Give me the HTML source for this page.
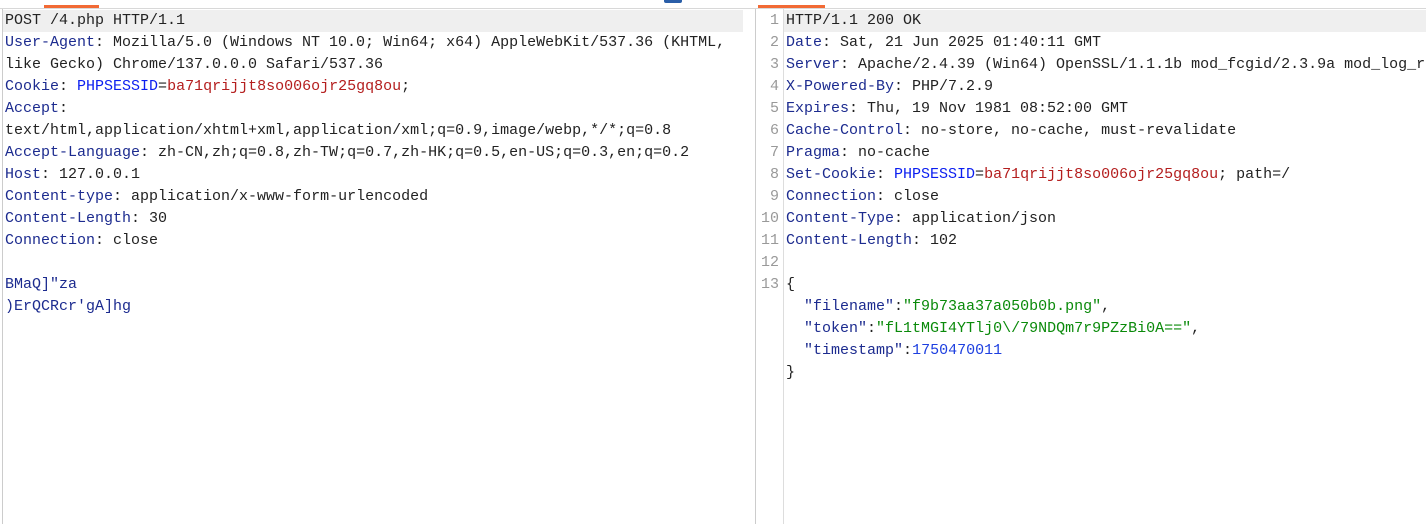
<!DOCTYPE html>
<html><head><meta charset="utf-8"><style>
body{margin:0;width:1426px;height:524px;background:#fff;position:relative;overflow:hidden;font-family:"Liberation Mono","Noto Sans CJK SC",monospace;font-size:15px;}
.tabline{position:absolute;top:8px;left:0;width:1426px;height:1px;background:#d8d8d8}
.or{position:absolute;top:5px;height:3px;background:#f26a35}
.ln{position:absolute;white-space:pre;line-height:22px;height:22px;color:#222;margin-top:1px}
.k{color:#1c2b8f}.b{color:#0b1ef0}.r{color:#b41e1e}.g{color:#0a8a0a}.n{color:#1d3fe0}
.num{position:absolute;left:757px;width:22px;text-align:right;color:#999;line-height:22px;white-space:pre;margin-top:1px}
</style></head><body>
<div class="tabline"></div>
<div class="or" style="left:44px;width:55px"></div>
<div class="or" style="left:758px;width:67px"></div>
<div style="position:absolute;left:664px;top:0;width:18px;height:3px;background:#2a5ea8;border-radius:0 0 2px 2px"></div>
<div style="position:absolute;left:2px;top:9px;width:1px;height:515px;background:#ccc"></div>
<div style="position:absolute;left:755px;top:9px;width:1px;height:515px;background:#ccc"></div>
<div style="position:absolute;left:783px;top:9px;width:1px;height:515px;background:#ddd"></div>
<div style="position:absolute;left:3px;top:10px;width:740px;height:22px;background:#efefef"></div>
<div style="position:absolute;left:784px;top:10px;width:642px;height:22px;background:#efefef"></div>

<div class="ln" style="left:5px;top:9px">POST /4.php HTTP/1.1</div>
<div class="ln" style="left:5px;top:31px"><span class="k">User-Agent</span>: Mozilla/5.0 (Windows NT 10.0; Win64; x64) AppleWebKit/537.36 (KHTML,</div>
<div class="ln" style="left:5px;top:53px">like Gecko) Chrome/137.0.0.0 Safari/537.36</div>
<div class="ln" style="left:5px;top:75px"><span class="k">Cookie</span>: <span class="b">PHPSESSID</span>=<span class="r">ba71qrijjt8so006ojr25gq8ou</span>;</div>
<div class="ln" style="left:5px;top:97px"><span class="k">Accept</span>:</div>
<div class="ln" style="left:5px;top:119px">text/html,application/xhtml+xml,application/xml;q=0.9,image/webp,*/*;q=0.8</div>
<div class="ln" style="left:5px;top:141px"><span class="k">Accept-Language</span>: zh-CN,zh;q=0.8,zh-TW;q=0.7,zh-HK;q=0.5,en-US;q=0.3,en;q=0.2</div>
<div class="ln" style="left:5px;top:163px"><span class="k">Host</span>: 127.0.0.1</div>
<div class="ln" style="left:5px;top:185px"><span class="k">Content-type</span>: application/x-www-form-urlencoded</div>
<div class="ln" style="left:5px;top:207px"><span class="k">Content-Length</span>: 30</div>
<div class="ln" style="left:5px;top:229px"><span class="k">Connection</span>: close</div>
<div class="ln k" style="left:5px;top:273px">BMaQ]"za</div>
<div class="ln k" style="left:5px;top:295px">)ErQCRcr'gA]hg</div>

<div class="num" style="top:9px">1
2
3
4
5
6
7
8
9
10
11
12
13</div>
<div class="ln" style="left:786px;top:9px">HTTP/1.1 200 OK</div>
<div class="ln" style="left:786px;top:31px"><span class="k">Date</span>: Sat, 21 Jun 2025 01:40:11 GMT</div>
<div class="ln" style="left:786px;top:53px"><span class="k">Server</span>: Apache/2.4.39 (Win64) OpenSSL/1.1.1b mod_fcgid/2.3.9a mod_log_r</div>
<div class="ln" style="left:786px;top:75px"><span class="k">X-Powered-By</span>: PHP/7.2.9</div>
<div class="ln" style="left:786px;top:97px"><span class="k">Expires</span>: Thu, 19 Nov 1981 08:52:00 GMT</div>
<div class="ln" style="left:786px;top:119px"><span class="k">Cache-Control</span>: no-store, no-cache, must-revalidate</div>
<div class="ln" style="left:786px;top:141px"><span class="k">Pragma</span>: no-cache</div>
<div class="ln" style="left:786px;top:163px"><span class="k">Set-Cookie</span>: <span class="b">PHPSESSID</span>=<span class="r">ba71qrijjt8so006ojr25gq8ou</span>; path=/</div>
<div class="ln" style="left:786px;top:185px"><span class="k">Connection</span>: close</div>
<div class="ln" style="left:786px;top:207px"><span class="k">Content-Type</span>: application/json</div>
<div class="ln" style="left:786px;top:229px"><span class="k">Content-Length</span>: 102</div>
<div class="ln" style="left:786px;top:273px">{</div>
<div class="ln" style="left:786px;top:295px">  <span class="k">"filename"</span>:<span class="g">"f9b73aa37a050b0b.png"</span>,</div>
<div class="ln" style="left:786px;top:317px">  <span class="k">"token"</span>:<span class="g">"fL1tMGI4YTlj0\/79NDQm7r9PZzBi0A=="</span>,</div>
<div class="ln" style="left:786px;top:339px">  <span class="k">"timestamp"</span>:<span class="n">1750470011</span></div>
<div class="ln" style="left:786px;top:361px">}</div>
</body></html>
